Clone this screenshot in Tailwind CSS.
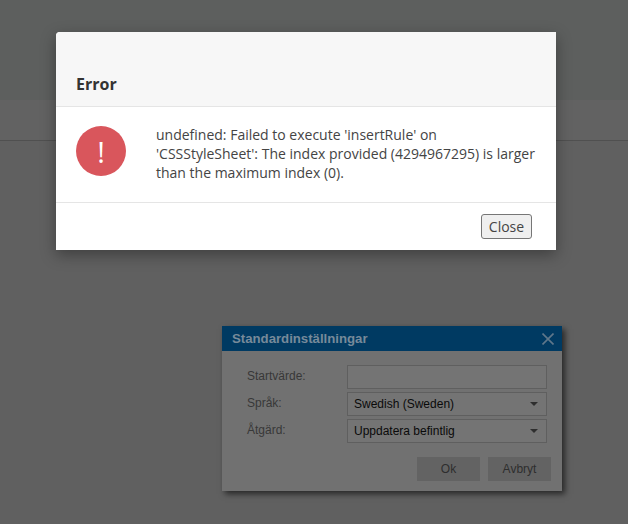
<!DOCTYPE html>
<html>
<head>
<meta charset="utf-8">
<script src="https://cdn.jsdelivr.net/npm/@tailwindcss/browser@4"></script>
</head>
<body class="m-0 overflow-hidden">
<div class="relative w-[628px] h-[524px] overflow-hidden bg-[#606060] font-['Open_Sans',sans-serif]">
  <div class="h-[100px] bg-[#5d5f5e]"></div>
  <div class="h-[41px] bg-[#626262] border-b border-[#505050]"></div>

  <div class="absolute left-[222px] top-[326px] w-[340px] h-[165px] bg-[#717171] shadow-[3px_3px_6px_rgba(0,0,0,0.6)] font-['Liberation_Sans',sans-serif] text-[12px] flex flex-col">
    <div class="h-[25px] bg-[#003a62] flex items-center justify-between pl-[10px] pr-[8px]">
      <span class="font-bold text-[13.2px] text-[#778a9a]">Standardinställningar</span>
      <svg width="12" height="12" viewBox="0 0 12 12" fill="none" stroke="#5f778a" stroke-width="1.6"><path d="M0.5 0.5 L11.5 11.5 M11.5 0.5 L0.5 11.5"/></svg>
    </div>
    <div class="pt-[14px] pl-[25px] pr-[15px] grid grid-cols-[100px_200px] auto-rows-[24px] gap-y-[3px] items-center">
      <span class="text-[#383838] -mt-[3px]">Startvärde:</span>
      <div class="h-[24px] border border-[#5f5f5f] bg-[#747474]"></div>
      <span class="text-[#383838] -mt-[3px]">Språk:</span>
      <div class="h-[24px] border border-[#5f5f5f] bg-[#747474] flex items-center justify-between pl-[6px] pr-[8px] text-[#0a0a0a]"><span>Swedish (Sweden)</span><span class="w-0 h-0 border-x-[4px] border-x-transparent border-t-[4px] border-t-[#2e2e2e]"></span></div>
      <span class="text-[#383838] -mt-[3px]">Åtgärd:</span>
      <div class="h-[24px] border border-[#5f5f5f] bg-[#747474] flex items-center justify-between pl-[6px] pr-[8px] text-[#0a0a0a]"><span>Uppdatera befintlig</span><span class="w-0 h-0 border-x-[4px] border-x-transparent border-t-[4px] border-t-[#2e2e2e]"></span></div>
    </div>
    <div class="flex justify-end gap-[8px] pr-[11px] mt-[14px]">
      <div class="w-[63px] h-[24px] bg-[#636363] text-[#2e2e2e] flex items-center justify-center">Ok</div>
      <div class="w-[63px] h-[24px] bg-[#636363] text-[#2e2e2e] flex items-center justify-center">Avbryt</div>
    </div>
  </div>

  <div class="absolute left-[56px] top-[32px] w-[500px] h-[218px] bg-white rounded-tl-[4px] shadow-[0_5px_15px_rgba(0,0,0,0.35)] text-[#444444] flex flex-col">
    <div class="h-[75px] bg-[#f7f7f7] border-b border-[#e5e5e5] rounded-tl-[4px] pl-[20px] flex items-end pb-[11px]">
      <h2 class="font-bold text-[16px] leading-[22px] text-[#333333]">Error</h2>
    </div>
    <div class="h-[96px] border-b border-[#e5e5e5] pl-[20px] pr-[20px] pt-[19px] flex gap-[30px]">
      <div class="w-[50px] h-[50px] rounded-full bg-[#d9565c] text-white flex items-center justify-center shrink-0 text-[29px] font-normal leading-none">!</div>
      <p class="text-[14px] leading-[19px] w-[380px] -mt-[1px]">undefined: Failed to execute 'insertRule' on 'CSSStyleSheet': The index provided (4294967295) is larger than the maximum index (0).</p>
    </div>
    <div class="flex-1 flex items-center justify-end pr-[24px]">
      <button class="w-[51px] h-[25px] text-[14px] leading-none bg-[#efefef] border border-[#767676] rounded-[3px] text-[#444444]">Close</button>
    </div>
  </div>
</div>
</body>
</html>
